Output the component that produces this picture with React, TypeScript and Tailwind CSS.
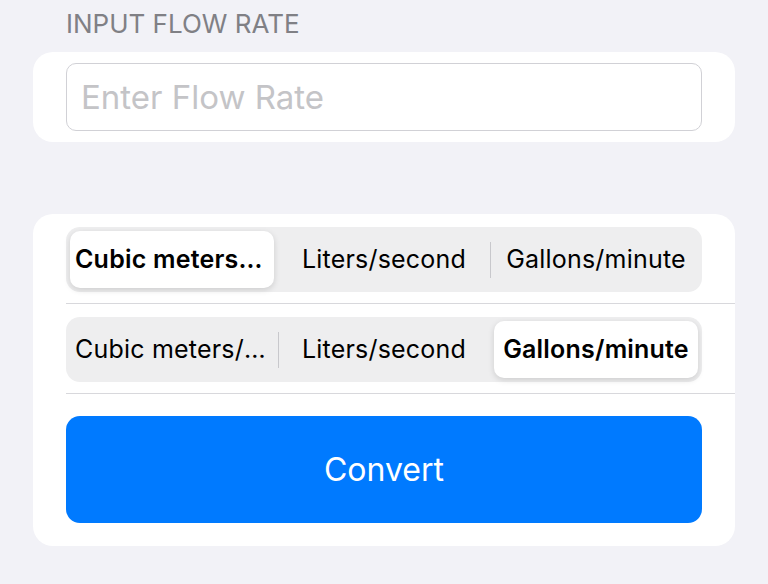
import { useState } from 'react';

const UNITS = ['Cubic meters/second', 'Liters/second', 'Gallons/minute'];

function Segmented({ selected, onSelect }: { selected: number; onSelect: (i: number) => void }) {
  return (
    <div className="flex h-[65px] w-[636px] items-stretch rounded-[14px] bg-[#eeeeef]">
      {UNITS.map((u, i) => {
        const active = i === selected;
        const showSep = i > 0 && selected !== i && selected !== i - 1;
        return (
          <div key={u} className="relative flex min-w-0 flex-1 basis-0 items-stretch p-[4px]">
            {i > 0 && (
              <div
                className={`absolute left-0 top-1/2 h-[36px] w-px -translate-y-1/2 ${showSep ? 'bg-[#c8c8cc]' : 'bg-transparent'}`}
              />
            )}
            <button
              type="button"
              onClick={() => onSelect(i)}
              className={`flex min-w-0 flex-1 items-center justify-center rounded-[10px] px-[5px] text-[25px] tracking-[0.2px] text-black ${
                active ? 'bg-white font-semibold shadow-[0_2px_6px_rgba(0,0,0,0.14)]' : ''
              }`}
            >
              <span className="truncate">{u}</span>
            </button>
          </div>
        );
      })}
    </div>
  );
}

export default function App() {
  const [from, setFrom] = useState(0);
  const [to, setTo] = useState(2);
  const [value, setValue] = useState('');

  return (
    <div
      className="min-h-[584px] w-[768px] bg-[#f2f2f7] px-[33px] pt-[9px]"
      style={{ fontFamily: 'Inter, "Noto Sans", sans-serif' }}
    >
      <div className="pl-[33px] text-[26px] leading-[30px] text-[#808085]">INPUT FLOW RATE</div>

      {/* input card */}
      <div className="mt-[13px] h-[90px] rounded-[20px] bg-white px-[33px] pt-[11px]">
        <input
          value={value}
          onChange={(e) => setValue(e.target.value)}
          placeholder="Enter Flow Rate"
          className="h-[68px] w-[636px] rounded-[10px] border border-[#d1d1d6] px-[14px] text-[33px] text-black outline-none placeholder:text-[#c4c4c7]"
        />
      </div>

      {/* converter card */}
      <div className="mt-[72px] rounded-[20px] bg-white pb-[23px] pl-[33px] pt-[13px]">
        <Segmented selected={from} onSelect={setFrom} />
        <div className="mt-[11px] h-px bg-[#d8d8dc]" />
        <div className="mt-[13px]">
          <Segmented selected={to} onSelect={setTo} />
        </div>
        <div className="mt-[11px] h-px bg-[#d8d8dc]" />
        <button
          type="button"
          className="mt-[22px] flex h-[107px] w-[636px] items-center justify-center rounded-[14px] bg-[#007aff] text-[32px] text-white"
        >
          Convert
        </button>
      </div>
    </div>
  );
}
